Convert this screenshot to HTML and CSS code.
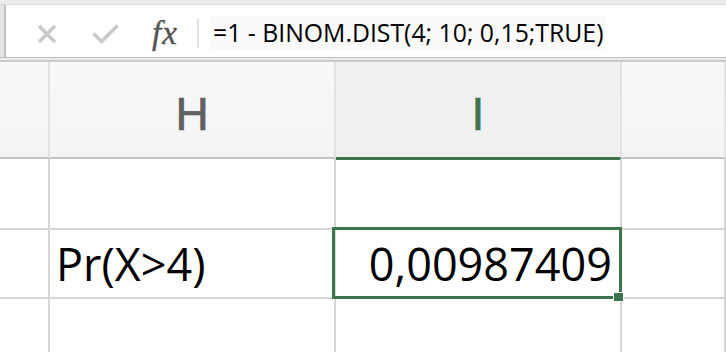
FILE: index.html
```html
<!DOCTYPE html>
<html lang="en">
<head>
    <meta charset="UTF-8">
    <meta name="viewport" content="width=device-width, initial-scale=1.0">
    <title>BINOM.DIST</title>
    <link rel="stylesheet" href="styles.css">
</head>
<body>
    <div class="toolbar">
        <div class="formula-bar">
            <div class="name-edge"></div>
            <svg class="icon-cancel" width="20" height="20" viewBox="0 0 20 20">
                <path d="M2 2 L18 18 M18 2 L2 18" stroke="#c9c9c9" stroke-width="3.4" fill="none"/>
            </svg>
            <svg class="icon-enter" width="27" height="20" viewBox="0 0 27 20">
                <path d="M1.5 9.5 L9.5 17.5 L25.5 1.5" stroke="#c9c9c9" stroke-width="3.4" fill="none"/>
            </svg>
            <div class="fx">fx</div>
            <div class="separator"></div>
            <div class="formula">=1 - BINOM.DIST(4; 10; 0,15;TRUE)</div>
        </div>
        <div class="bar-divider"></div>
    </div>

    <div class="sheet">
        <div class="cell col-head corner"></div>
        <div class="cell col-head">H</div>
        <div class="cell col-head selected">I</div>
        <div class="cell col-head"></div>

        <div class="cell row-1"></div>
        <div class="cell row-1"></div>
        <div class="cell row-1"></div>
        <div class="cell row-1"></div>

        <div class="cell row-2"></div>
        <div class="cell row-2 text">Pr(X&gt;4)</div>
        <div class="cell row-2 number active">
            0,00987409
            <div class="selection"><div class="fill-handle"></div></div>
        </div>
        <div class="cell row-2"></div>

        <div class="cell row-3"></div>
        <div class="cell row-3"></div>
        <div class="cell row-3"></div>
        <div class="cell row-3"></div>
    </div>
</body>
</html>
```

FILE: styles.css
```css
:root {
    --grid-line: #d6d6d6;
    --excel-green: #3c7450;
}

body {
    margin: 0;
    background: #fff;
    font-family: 'Open Sans', sans-serif;
    overflow: hidden;
}

/* formula bar */
.toolbar {
    background: #ececec;
    padding-top: 4px;
}

.formula-bar {
    display: flex;
    align-items: center;
    height: 52px;
    background: #fff;
    border-top: 1px solid #dcdcdc;
    border-bottom: 1px solid #bdbdbd;
}

.name-edge {
    align-self: stretch;
    width: 4px;
    background: #e6e6e6;
    border-right: 2px solid #c2c2c2;
}

.icon-cancel {
    margin-left: 31px;
    margin-top: 6px;
}

.icon-enter {
    margin-left: 35px;
    margin-top: 5px;
}

.fx {
    width: 32px;
    margin-left: 33px;
    margin-top: 4px;
    font-family: 'Liberation Serif', serif;
    font-style: italic;
    font-size: 33px;
    letter-spacing: 1px;
    color: #555;
    -webkit-text-stroke: 0.4px #555;
}

.separator {
    width: 2px;
    height: 29px;
    margin-left: 13px;
    margin-top: 4px;
    background: #e3e3e3;
}

.formula {
    margin-left: 12px;
    margin-top: 4px;
    padding: 2px 2px;
    background: #fafafa;
    font-size: 24.8px;
    line-height: 1.2;
    color: #000;
    white-space: nowrap;
}

.bar-divider {
    height: 2px;
    border-bottom: 2px solid #c9c9c9;
}

/* grid */
.sheet {
    display: grid;
    grid-template-columns: 50px 286px 286px 1fr;
    grid-template-rows: 97px 71px 69px 60px;
}

.cell {
    box-sizing: border-box;
    border-right: 2px solid var(--grid-line);
    border-bottom: 2px solid var(--grid-line);
    display: flex;
    align-items: center;
    line-height: 1;
}

.col-head {
    justify-content: center;
    padding-top: 9px;
    background: linear-gradient(#f8f8f8, #f4f4f4);
    border-right-color: #e2e2e2;
    border-bottom-color: #c3c3c3;
    font-family: 'Liberation Sans', sans-serif;
    font-size: 46px;
    color: #606060;
    -webkit-text-stroke: 0.7px currentColor;
}

.col-head.selected {
    background: #f0f0f0;
    color: var(--excel-green);
    border-bottom: 3px solid var(--excel-green);
    margin-bottom: -1px;
}

.text,
.number {
    font-size: 45px;
    color: #000;
}

.text {
    padding-left: 6px;
}

.number {
    justify-content: flex-end;
    padding-right: 8px;
}

.active {
    position: relative;
}

.selection {
    position: absolute;
    top: -3px;
    left: -4px;
    right: -2px;
    bottom: -2px;
    border: 3px solid var(--excel-green);
}

.fill-handle {
    position: absolute;
    right: -5px;
    bottom: -6px;
    width: 9px;
    height: 8px;
    background: var(--excel-green);
    border: 1px solid #fff;
}
```
